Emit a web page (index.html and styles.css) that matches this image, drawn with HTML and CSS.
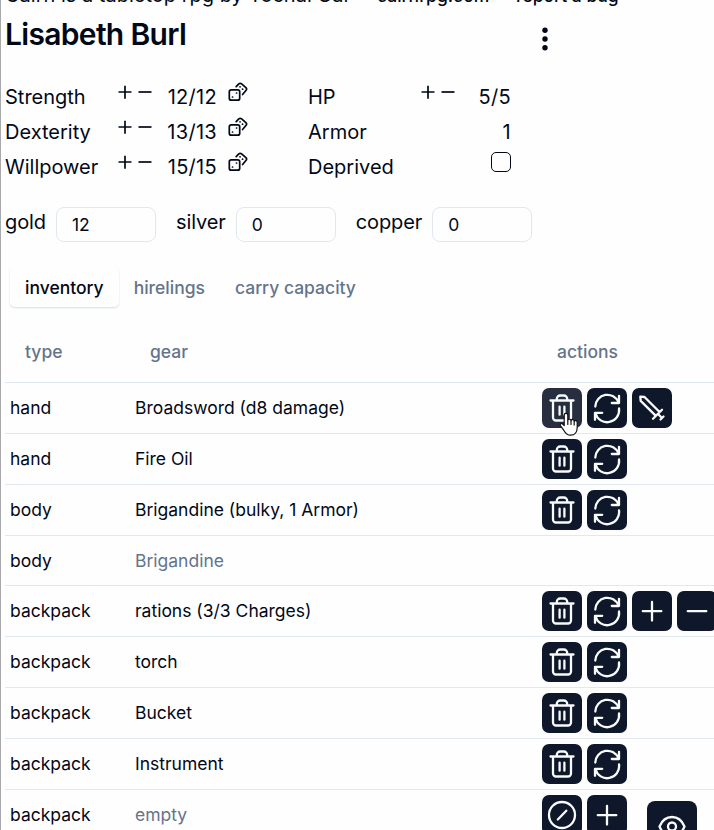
FILE: index.html
```html
<!DOCTYPE html>
<html lang="en">
<head>
<meta charset="utf-8">
<title>Lisabeth Burl</title>
<link rel="stylesheet" href="styles.css">
</head>
<body>
<svg width="0" height="0" class="defs">
  <symbol id="trash" viewBox="0 0 40 40"><path d="M8.500 12.500h23M11 12.500v17a3 3 0 0 0 3 3h12a3 3 0 0 0 3-3v-17M14.800 12v-1.200a3.300 3.300 0 0 1 3.300-3.300h3.800a3.300 3.300 0 0 1 3.300 3.300V12M17.600 18.700v8M22.400 18.700v8"/></symbol>
  <symbol id="swap" viewBox="0 0 40 40"><path d="M8.300 18.500A12 12 0 0 1 31.500 14.500M32 7.800V15h-7.200M32 20.500A12 12 0 0 1 8.500 25.200M8 31.800v-7h7.200"/></symbol>
  <symbol id="sword" viewBox="0 0 40 40"><path d="M8.300 8.700l4.200.3L27.300 23.800M8.300 8.700l.4 4.200L23.600 27.600M21 30.700l9-9M26.500 26.500l3.500 3.500M28.500 31.500l3-3"/></symbol>
  <symbol id="plus" viewBox="0 0 40 40"><path d="M20 11v18.500M10.800 20.200h18.500"/></symbol>
  <symbol id="minus" viewBox="0 0 40 40"><path d="M10.800 20.200h18.500"/></symbol>
  <symbol id="slash" viewBox="0 0 40 40"><circle cx="20" cy="20" r="13"/><path d="M15.800 24.500l8.500-8.800"/></symbol>
  <symbol id="splus" viewBox="0 0 14 14"><path d="M7 .7v13M.5 7h13"/></symbol>
  <symbol id="sminus" viewBox="0 0 14 14"><path d="M.5 7h13"/></symbol>
  <symbol id="dice" viewBox="0 0 20 20"><rect x="1.300" y="7.800" width="10.400" height="10.400" rx="2"/><path d="M8.200 4.700l2.600-2.800q1.400-1.200 2.800 0l4.300 3.700q1.300 1.300.2 2.700l-3.500 4.200"/><path d="M4.500 15h.1M8.500 11h.1M12 4.800h.1M14.500 7.200h.1"/></symbol>
</svg>
<div class="page">
  <div class="credits"><span>Cairn is a tabletop rpg by Yochai Gal</span><a>cairnrpg.com</a><a>report a bug</a></div>
  <header class="title">
    <h1>Lisabeth Burl</h1>
    <svg class="menu" viewBox="0 0 8 24"><circle cx="4" cy="3.300" r="2.700"/><circle cx="4" cy="12" r="2.700"/><circle cx="4" cy="20.700" r="2.700"/></svg>
  </header>
  <section class="stats">
    <div class="col">
      <div class="stat"><span class="label">Strength</span><span class="step"><svg><use href="#splus"/></svg><svg><use href="#sminus"/></svg></span><span class="value">12/12</span><svg class="dice"><use href="#dice"/></svg></div>
      <div class="stat"><span class="label">Dexterity</span><span class="step"><svg><use href="#splus"/></svg><svg><use href="#sminus"/></svg></span><span class="value">13/13</span><svg class="dice"><use href="#dice"/></svg></div>
      <div class="stat"><span class="label">Willpower</span><span class="step"><svg><use href="#splus"/></svg><svg><use href="#sminus"/></svg></span><span class="value">15/15</span><svg class="dice"><use href="#dice"/></svg></div>
    </div>
    <div class="col side">
      <div class="stat"><span class="label">HP</span><span class="step"><svg><use href="#splus"/></svg><svg><use href="#sminus"/></svg></span><span class="value">5/5</span></div>
      <div class="stat"><span class="label">Armor</span><span></span><span class="value">1</span></div>
      <div class="stat"><span class="label">Deprived</span><span></span><span class="check"></span></div>
    </div>
  </section>
  <section class="coins">
    <label>gold<input value="12"></label>
    <label>silver<input value="0"></label>
    <label>copper<input value="0"></label>
  </section>
  <nav class="tabs"><span class="tab active">inventory</span><span class="tab">hirelings</span><span class="tab">carry capacity</span></nav>
  <section class="table">
    <div class="row head"><span>type</span><span>gear</span><span>actions</span></div>
    <div class="row"><span>hand</span><span>Broadsword (d8 damage)</span><div class="actions"><b class="btn hover"><svg><use href="#trash"/></svg><svg class="cursor" viewBox="0 0 20 25"><path d="M5.200 13.500V3.200a1.800 1.800 0 0 1 3.600 0V8a1.700 1.700 0 0 1 3.200.6 1.700 1.700 0 0 1 3.200.8 1.600 1.600 0 0 1 3 .9v5.200c0 5-2.400 7.700-6.700 7.700-3.600 0-5-1.800-6.800-5l-3.300-4.600c-.8-1.500 1-2.800 2.200-1.600z"/><path d="M8.800 8v4.500M12 9v3.500M15.200 10v3"/></svg></b><b class="btn"><svg><use href="#swap"/></svg></b><b class="btn"><svg><use href="#sword"/></svg></b></div></div>
    <div class="row"><span>hand</span><span>Fire Oil</span><div class="actions"><b class="btn"><svg><use href="#trash"/></svg></b><b class="btn"><svg><use href="#swap"/></svg></b></div></div>
    <div class="row"><span>body</span><span>Brigandine (bulky, 1 Armor)</span><div class="actions"><b class="btn"><svg><use href="#trash"/></svg></b><b class="btn"><svg><use href="#swap"/></svg></b></div></div>
    <div class="row short"><span>body</span><span class="muted">Brigandine</span></div>
    <div class="row"><span>backpack</span><span>rations (3/3 Charges)</span><div class="actions"><b class="btn"><svg><use href="#trash"/></svg></b><b class="btn"><svg><use href="#swap"/></svg></b><b class="btn"><svg><use href="#plus"/></svg></b><b class="btn"><svg><use href="#minus"/></svg></b></div></div>
    <div class="row"><span>backpack</span><span>torch</span><div class="actions"><b class="btn"><svg><use href="#trash"/></svg></b><b class="btn"><svg><use href="#swap"/></svg></b></div></div>
    <div class="row"><span>backpack</span><span>Bucket</span><div class="actions"><b class="btn"><svg><use href="#trash"/></svg></b><b class="btn"><svg><use href="#swap"/></svg></b></div></div>
    <div class="row"><span>backpack</span><span>Instrument</span><div class="actions"><b class="btn"><svg><use href="#trash"/></svg></b><b class="btn"><svg><use href="#swap"/></svg></b></div></div>
    <div class="row"><span>backpack</span><span class="muted">empty</span><div class="actions"><b class="btn"><svg><use href="#slash"/></svg></b><b class="btn"><svg><use href="#plus"/></svg></b></div></div>
  </section>
</div>
<div class="eye"><svg viewBox="0 0 50 50"><path d="M12.500 25.500C15 19.500 19.500 16 25 16s10 3.500 12.500 9.500C35 31.500 30.500 35 25 35s-10-3.500-12.500-9.500z"/><circle cx="25" cy="25.500" r="4"/></svg></div>
</body>
</html>
```

FILE: styles.css
```css
* { box-sizing: border-box; }
html, body { height: 830px; overflow: hidden; }
body { margin: 0; background: #fefefe; color: #020817; font: 20px/35px Inter, sans-serif; }
svg { display: block; fill: none; stroke: currentColor; stroke-linecap: round; stroke-linejoin: round; }
.defs { position: absolute; }
.page { height: 830px; overflow: hidden; border-left: 1px solid #a9a9ab; padding-left: 4px; }
.credits { display: flex; align-items: baseline; margin-top: -17px; height: 25px; line-height: 25px; font-size: 17.5px; font-weight: 500; white-space: nowrap; }
.credits span { width: 372px; font-size: 20px; font-weight: 400; }
.credits a { width: 139px; }
.title { display: flex; height: 71px; padding-top: 7px; }
h1 { margin: 0; width: 536px; font-size: 30px; line-height: 38px; font-weight: 600; letter-spacing: -0.68px; }
.menu { width: 8px; height: 24px; margin-top: 12px; fill: #020817; stroke: none; }
.stats { display: flex; height: 105px; }
.col { width: 303px; }
.stat { display: grid; grid-template-columns: 113px 34px 65px 31px; height: 35px; }
.side .stat { grid-template-columns: 113px 34px 56px; }
.label, .value { padding-top: 1px; }
.step { display: flex; gap: 6px; padding-top: 6px; }
.step svg { width: 14px; height: 14px; stroke-width: 1.7; stroke-linecap: butt; flex: none; }
.value { text-align: right; letter-spacing: 0.3px; }
.dice { width: 20px; height: 20px; margin: 3px 0 0 11px; stroke-width: 1.7; }
.check { width: 20px; height: 20px; margin-top: 3px; border: 1px solid #020817; border-radius: 5px; justify-self: end; }
.coins { display: flex; gap: 20px; padding-top: 23px; height: 78px; letter-spacing: -0.1px; }
.coins label { display: flex; gap: 10px; line-height: 30px; }
.coins input { width: 100px; height: 35px; padding: 0 15px; border: 1px solid #e2e8f0; border-radius: 8px; background: transparent; color: inherit; font: 17.5px Inter, sans-serif; outline: 0; }
.tabs { display: flex; padding: 5px 5px 0; height: 60px; font-size: 17.5px; font-weight: 500; color: #64748b; }
.tab { height: 40px; padding: 0 15px; line-height: 41px; }
.active { color: #020817; border-radius: 5px; box-shadow: 0 1px 2px #cfdfe9; }
.table { font-size: 17.5px; width: 714px; }
.row { display: grid; grid-template-columns: 130px 402px 1fr; height: 51px; border-bottom: 1px solid #e2e8f0; line-height: 50px; padding-left: 5px; }
.row.short { height: 50px; }
.row.head { height: 61px; padding-left: 20px; line-height: 60px; font-weight: 500; color: #64748b; grid-template-columns: 125px 407px 1fr; }
.row:not(.head) > :nth-child(2) { margin-left: -5px; }
.muted { color: #64748b; }
.actions { display: flex; gap: 5px; padding-top: 5px; }
.btn { position: relative; flex: none; width: 40px; height: 40px; border-radius: 7px; background: #0f172a; color: #f8fafc; }
.btn > svg { width: 40px; height: 40px; stroke-width: 2.3; }
.btn.hover { background: #272e3f; }
.btn > .cursor { position: absolute; left: 17px; top: 24px; width: 20px; height: 25px; fill: #fff; stroke: #111; stroke-width: 1.2; z-index: 2; }
.eye { position: absolute; left: 647px; top: 801px; width: 50px; height: 29px; overflow: hidden; border-radius: 8px 8px 0 0; background: #0f172a; color: #f8fafc; }
.eye svg { width: 50px; height: 50px; stroke-width: 2.3; }
```
